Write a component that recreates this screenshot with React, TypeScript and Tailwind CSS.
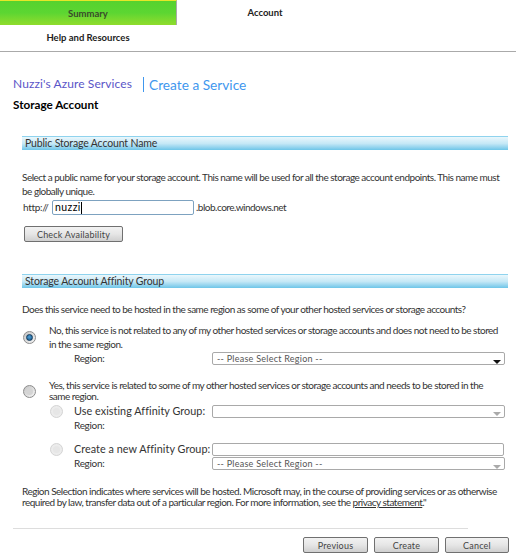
import React from 'react';

const Radio = ({ checked, disabled }: { checked?: boolean; disabled?: boolean }) => (
  <span className={`flex h-[13px] w-[13px] shrink-0 items-center justify-center rounded-full border ${disabled ? 'border-[#d4d4d4] bg-[#ececec]' : 'border-[#8c8c8c] bg-gradient-to-br from-[#c4c4c4] to-[#f6f6f6]'}`}>
    {checked ? (
      <span className="h-[7px] w-[7px] rounded-full border border-[#123a5c] bg-[radial-gradient(circle_at_45%_40%,#4fa0d8,#14507f)]" />
    ) : (
      <span className={`h-[7px] w-[7px] rounded-full ${disabled ? 'bg-[#e6e6e6]' : 'bg-[#d4d4d4]'}`} />
    )}
  </span>
);

const SectionHeader = ({ label }: { label: string }) => (
  <div className="ml-[22px] h-[14px] w-[486px] border-t border-[#8fd3ee] bg-gradient-to-b from-[#eaf7fc] via-[#c5e8f6] to-[#6cc5e8] pl-[3px] text-[10.5px] leading-[13px] tracking-[-0.15px] text-[#333]">
    {label}
  </div>
);

const Select = ({ value, dark }: { value?: string; dark?: boolean }) => (
  <div className="flex h-[13px] w-[293px] items-center justify-between rounded-[2px] border border-[#a9a9a9] bg-white pl-[4px] pr-[3px] text-[9px] leading-[11px] tracking-[0.25px] text-[#555]">
    <span>{value}</span>
    <svg width="8" height="4" viewBox="0 0 8 4" className="mt-[6px]">
      <path d="M0 0h8L4 4z" fill={dark ? '#111' : '#aaa'} />
    </svg>
  </div>
);

const Button = ({ label, className }: { label: string; className: string }) => (
  <button className={`h-[16px] rounded-[2px] border border-[#707070] bg-gradient-to-b from-[#f2f2f2] via-[#e6e6e6] to-[#cfcfcf] text-[9px] leading-[13px] tracking-[0.2px] text-[#444] ${className}`}>
    {label}
  </button>
);

export default function App() {
  return (
    <div className="h-[560px] w-[516px] overflow-hidden bg-white font-['Lato',sans-serif] text-[10px] tracking-[-0.5px] text-[#333]">
      <div className="flex h-[25px] text-[9.5px] font-bold leading-[25px] tracking-normal">
        <div className="w-[177px] border-r border-[#aaa] border-t border-t-[#e6e628] bg-gradient-to-b from-[#56d22e] via-[#5cd632] to-[#8fdc2c] text-center leading-[26px] text-[#3a4a2a]">
          Summary
        </div>
        <div className="w-[176px] text-center text-[#222]">Account</div>
      </div>
      <div className="h-[27px] border-b border-[#aaa] text-[9.5px] font-bold leading-[25px] tracking-normal text-[#222]">
        <div className="w-[176px] text-center">Help and Resources</div>
      </div>

      <div className="ml-[13px] mt-[23px] flex h-[18px] items-center tracking-normal">
        <span className="text-[12px] tracking-[0.1px] text-[#5a55c8]">Nuzzi's Azure Services</span>
        <span className="ml-[11px] border-l border-[#3f97ee] pl-[5px] text-[13.7px] leading-[15px] text-[#3f97ee]">
          Create a Service
        </span>
      </div>
      <div className="ml-[13px] mt-[2px] text-[11.7px] font-bold leading-[18px] tracking-normal text-black">Storage Account</div>

      <div className="mt-[23px]">
        <SectionHeader label="Public Storage Account Name" />
      </div>
      <p className="ml-[22px] mt-[20px] w-[486px] leading-[14px]">
        Select a public name for your storage account. This name will be used for all the storage account endpoints. This name must be globally unique.
      </p>
      <div className="ml-[23px] mt-[2px] flex h-[15px] items-center">
        <span className="w-[29px] tracking-[-0.3px]">http://</span>
        <div className="flex h-[15px] w-[142px] items-center rounded-[2px] border border-[#7da2c0] pl-[2px] text-[10.5px] tracking-[0.4px] text-black">
          nuzzi<span className="h-[12px] w-px bg-black" />
        </div>
        <span className="ml-[2px]">.blob.core.windows.net</span>
      </div>
      <div className="ml-[24px] mt-[11px] flex">
        <Button label="Check Availability" className="w-[99px]" />
      </div>

      <div className="mt-[32px]">
        <SectionHeader label="Storage Account Affinity Group" />
      </div>
      <p className="ml-[22px] mt-[14px] whitespace-nowrap leading-[14px]">
        Does this service need to be hosted in the same region as some of your other hosted services or storage accounts?
      </p>

      <div className="ml-[23px] mt-[7px] flex items-center">
        <Radio checked />
        <p className="ml-[13px] w-[455px] leading-[14px]">
          No, this service is not related to any of my other hosted services or storage accounts and does not need to be stored in the same region.
        </p>
      </div>
      <div className="ml-[74px] mt-[1px] flex h-[13px] items-center">
        <span className="w-[138px] tracking-[-0.3px]">Region:</span>
        <Select value="-- Please Select Region --" dark />
      </div>

      <div className="ml-[23px] mt-[15px] flex items-center">
        <Radio />
        <p className="ml-[13px] w-[455px] leading-[11px]">
          Yes, this service is related to some of my other hosted services or storage accounts and needs to be stored in the same region.
        </p>
      </div>
      <div className="ml-[50px] mt-[2px] flex h-[14px] items-center">
        <Radio disabled />
        <span className="ml-[11px] w-[138px] text-[10.8px] tracking-[0.05px]">Use existing Affinity Group:</span>
        <Select />
      </div>
      <div className="ml-[74px] h-[14px] leading-[14px] tracking-[-0.3px]">Region:</div>

      <div className="ml-[50px] mt-[10px] flex h-[14px] items-center">
        <Radio disabled />
        <span className="ml-[11px] w-[138px] text-[10.8px] tracking-[0.05px]">Create a new Affinity Group:</span>
        <div className="h-[13px] w-[292px] rounded-[2px] border border-[#a9a9a9] bg-white" />
      </div>
      <div className="ml-[74px] mt-[1px] flex h-[13px] items-center">
        <span className="w-[138px] tracking-[-0.3px]">Region:</span>
        <Select value="-- Please Select Region --" />
      </div>

      <p className="ml-[22px] mt-[16px] w-[490px] leading-[11px]">
        Region Selection indicates where services will be hosted. Microsoft may, in the course of providing services or as otherwise required by law, transfer data out of a particular region. For more information, see the{' '}
        <span className="underline">privacy statement</span>."
      </p>

      <div className="ml-[13px] mt-[20px] h-px w-[455px] bg-[#ddd]" />
      <div className="ml-[303px] mt-[8px] flex gap-[6px]">
        <Button label="Previous" className="w-[65px]" />
        <Button label="Create" className="w-[65px]" />
        <Button label="Cancel" className="w-[64px]" />
      </div>
    </div>
  );
}
